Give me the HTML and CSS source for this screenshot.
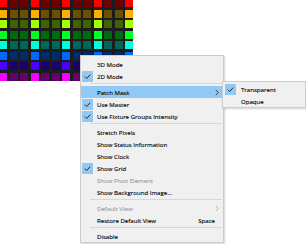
FILE: index.html
```html
<!DOCTYPE html>
<html lang="en">
<head>
    <meta charset="UTF-8">
    <meta name="viewport" content="width=device-width, initial-scale=1.0">
    <title>Pixel Matrix View</title>
    <link rel="stylesheet" href="styles.css">
</head>
<body>
    <div class="matrix">
        <div class="row red"><span></span><span></span><span></span><span></span><span></span><span></span><span></span><span></span><span></span><span></span><span></span><span></span><span></span></div>
        <div class="row orange"><span></span><span></span><span></span><span></span><span></span><span></span><span></span><span></span><span></span><span></span><span></span><span></span><span></span></div>
        <div class="row lime"><span></span><span></span><span></span><span></span><span></span><span></span><span></span><span></span><span></span><span></span><span></span><span></span><span></span></div>
        <div class="row green"><span></span><span></span><span></span><span></span><span></span><span></span><span></span><span></span><span></span><span></span><span></span><span></span><span></span></div>
        <div class="row cyan"><span></span><span></span><span></span><span></span><span></span><span></span><span></span><span></span><span></span><span></span><span></span><span></span><span></span></div>
        <div class="row blue"><span></span><span></span><span></span><span></span><span></span><span></span><span></span><span></span><span></span><span></span><span></span><span></span><span></span></div>
        <div class="row indigo"><span></span><span></span><span></span><span></span><span></span><span></span><span></span><span></span><span></span><span></span><span></span><span></span><span></span></div>
        <div class="row magenta"><span></span><span></span><span></span><span></span><span></span><span></span><span></span><span></span><span></span><span></span><span></span><span></span><span></span></div>
    </div>

    <div class="menu">
        <div class="item"><span class="check"></span><span class="label">3D Mode</span></div>
        <div class="item checked"><span class="check"><svg viewBox="0 0 11 11"><path d="M2.8 5.6l1.9 1.9 3.5-3.9"/></svg></span><span class="label">2D Mode</span></div>
        <div class="sep"></div>
        <div class="item active">
            <span class="check"></span><span class="label">Patch Mask</span>
            <svg class="arrow" viewBox="0 0 4 7"><path d="M0.8 0.8l2.4 2.7-2.4 2.7"/></svg>
            <div class="menu submenu">
                <div class="item checked"><span class="check"><svg viewBox="0 0 11 11"><path d="M2.8 5.6l1.9 1.9 3.5-3.9"/></svg></span><span class="label">Transparent</span></div>
                <div class="item"><span class="check"></span><span class="label">Opaque</span></div>
            </div>
        </div>
        <div class="item checked"><span class="check"><svg viewBox="0 0 11 11"><path d="M2.8 5.6l1.9 1.9 3.5-3.9"/></svg></span><span class="label">Use Master</span></div>
        <div class="item checked"><span class="check"><svg viewBox="0 0 11 11"><path d="M2.8 5.6l1.9 1.9 3.5-3.9"/></svg></span><span class="label">Use Fixture Groups Intensity</span></div>
        <div class="sep"></div>
        <div class="item"><span class="check"></span><span class="label">Stretch Pixels</span></div>
        <div class="item"><span class="check"></span><span class="label">Show Status Information</span></div>
        <div class="item"><span class="check"></span><span class="label">Show Clock</span></div>
        <div class="item checked"><span class="check"><svg viewBox="0 0 11 11"><path d="M2.8 5.6l1.9 1.9 3.5-3.9"/></svg></span><span class="label">Show Grid</span></div>
        <div class="item disabled"><span class="check"></span><span class="label">Show Pivot Element</span></div>
        <div class="item"><span class="check"></span><span class="label">Show Background Image...</span></div>
        <div class="sep"></div>
        <div class="item disabled">
            <span class="check"></span><span class="label">Default View</span>
            <svg class="arrow" viewBox="0 0 4 7"><path d="M0.8 0.8l2.4 2.7-2.4 2.7"/></svg>
        </div>
        <div class="item"><span class="check"></span><span class="label">Restore Default View</span><span class="shortcut">Space</span></div>
        <div class="sep"></div>
        <div class="item"><span class="check"></span><span class="label">Disable</span></div>
    </div>
</body>
</html>
```

FILE: styles.css
```css
body {
    margin: 0;
    background: #ffffff;
    font-family: "Open Sans", "Noto Sans", sans-serif;
    font-size: 6.1px;
    color: #000000;
    overflow: hidden;
}
.matrix {
    display: inline-flex;
    flex-direction: column;
    gap: 2.5px;
    margin: -1px 0 0 -1px;
    background: #1c1c1c;
}
.row {
    display: flex;
    gap: 2.5px;
}
.row span {
    width: 8px;
    height: 8px;
    background: var(--off);
}
.row span:nth-child(3n+1) {
    background: var(--on);
}
.red { --on: #ff0000; --off: #6c0000; }
.orange { --on: #ffae00; --off: #6c4f00; }
.lime { --on: #a6ff00; --off: #3f6300; }
.green { --on: #00ff22; --off: #006a12; }
.cyan { --on: #00ffd8; --off: #00665a; }
.blue { --on: #0068ff; --off: #002c6a; }
.indigo { --on: #4a00ff; --off: #1e006a; }
.magenta { --on: #f600ff; --off: #66006a; }

.menu {
    position: absolute;
    left: 80px;
    top: 55px;
    width: 144px;
    box-sizing: border-box;
    padding: 2px 0 0;
    background: #f0f0f0;
    border: 1px solid #cccccc;
    box-shadow: 1px 1px 2px rgba(0, 0, 0, 0.18);
    -webkit-text-stroke: 0.12px currentColor;
}
.item {
    position: relative;
    display: flex;
    align-items: center;
    height: 12px;
    white-space: nowrap;
}
.item.active {
    background: #91c9f7;
}
.item.disabled {
    color: #9d9d9d;
}
.check {
    width: 11px;
    height: 11px;
    margin-left: 1px;
    flex: none;
}
.checked .check {
    background: #90c8f6;
}
.check svg {
    display: block;
    width: 11px;
    height: 11px;
    fill: none;
    stroke: #2b2b2b;
    stroke-width: 1;
}
.label {
    flex: 1;
    padding-left: 4px;
}
.shortcut {
    margin-right: 8px;
}
.arrow {
    width: 4px;
    height: 7px;
    margin-right: 4px;
    fill: none;
    stroke: #333333;
    stroke-width: 0.9;
}
.disabled .arrow {
    stroke: #b0b0b0;
}
.sep {
    height: 1px;
    margin: 1px 1px 2px 9px;
    background: #d7d7d7;
}
.submenu {
    left: 141px;
    top: -5px;
    width: 84px;
    padding: 1px 0 0 1px;
    color: #000000;
}
.submenu .item {
    height: 12px;
}
.submenu .label {
    padding-left: 5px;
}
```
